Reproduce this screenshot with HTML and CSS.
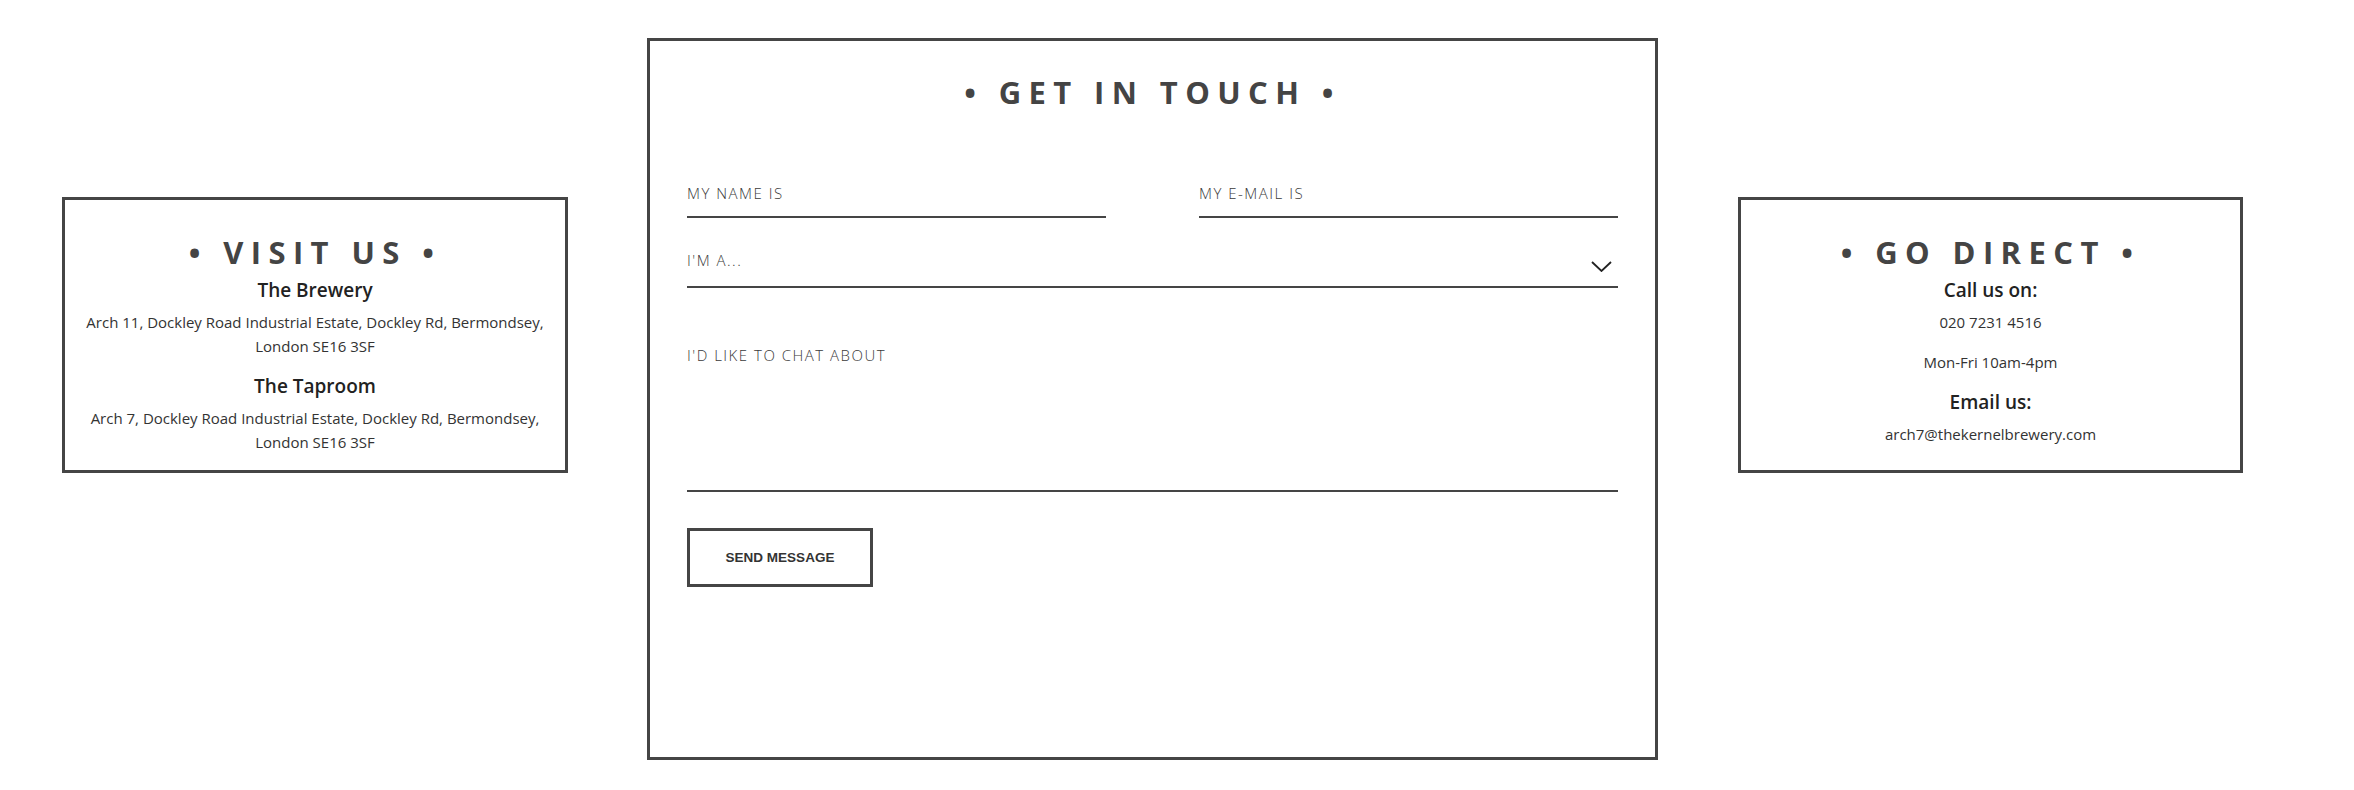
FILE: index.html
```html
<!DOCTYPE html>
<html lang="en">
<head>
<meta charset="utf-8">
<title>Contact</title>
<link rel="stylesheet" href="styles.css">
</head>
<body>
<main class="contact">
  <section class="card card--side">
    <h2 class="card-title">• VISIT US •</h2>
    <h3 class="card-sub">The Brewery</h3>
    <p class="card-text">Arch 11, Dockley Road Industrial Estate, Dockley Rd, Bermondsey,<br>London SE16 3SF</p>
    <h3 class="card-sub">The Taproom</h3>
    <p class="card-text">Arch 7, Dockley Road Industrial Estate, Dockley Rd, Bermondsey,<br>London SE16 3SF</p>
  </section>

  <section class="card card--form">
    <h2 class="card-title card-title--lg">• GET IN TOUCH •</h2>
    <form class="form">
      <div class="form-row">
        <input class="field" type="text" placeholder="MY NAME IS">
        <input class="field" type="email" placeholder="MY E-MAIL IS">
      </div>
      <div class="select-wrap">
        <select class="field field--select">
          <option>I'M A...</option>
        </select>
        <svg class="chevron" width="21" height="11" viewBox="0 0 21 11" aria-hidden="true">
          <path d="M1 1 L10.5 10 L20 1" fill="none" stroke="#222" stroke-width="1.8"/>
        </svg>
      </div>
      <textarea class="field field--area" placeholder="I'D LIKE TO CHAT ABOUT"></textarea>
      <button class="send" type="button">SEND MESSAGE</button>
    </form>
  </section>

  <section class="card card--side card--right">
    <h2 class="card-title">• GO DIRECT •</h2>
    <h3 class="card-sub">Call us on:</h3>
    <p class="card-text">020 7231 4516</p>
    <p class="card-text">Mon-Fri 10am-4pm</p>
    <h3 class="card-sub">Email us:</h3>
    <p class="card-text">arch7@thekernelbrewery.com</p>
  </section>
</main>
</body>
</html>
```
FILE: styles.css
```css
body {
  margin: 0;
  background: #ffffff;
  font-family: "Open Sans", "Segoe UI", sans-serif;
  color: #333333;
}

.contact {
  display: flex;
  align-items: flex-start;
  gap: 79px;
  padding: 38px 0 0 62px;
}

.card {
  box-sizing: border-box;
  border: 3px solid #454545;
  background: #ffffff;
}

.card--side {
  width: 506px;
  height: 276px;
  margin-top: 159px;
  padding: 34px 16px 0;
  text-align: center;
}

.card--right {
  width: 505px;
  margin-left: 1px;
}

.card--form {
  width: 1011px;
  padding: 31px 37px 170px 37px;
}

.card-title {
  margin: 0 0 8px;
  font-size: 31px;
  line-height: 36px;
  font-weight: 700;
  letter-spacing: 7.4px;
  color: #444444;
  text-align: center;
}

.card-title--lg {
  line-height: 40px;
  margin-bottom: 57px;
}

.card-sub {
  margin: 0 0 8px;
  font-size: 19px;
  line-height: 24px;
  font-weight: 600;
  color: #222222;
}

.card-text {
  margin: 0 0 16px;
  font-size: 15px;
  line-height: 24px;
  color: #333333;
}

.form {
  display: flex;
  flex-direction: column;
}

.form-row {
  display: grid;
  grid-template-columns: 1fr 1fr;
  column-gap: 93px;
}

.field {
  display: block;
  box-sizing: border-box;
  width: 100%;
  height: 49px;
  margin: 0;
  padding: 0;
  border: 0;
  border-bottom: 2px solid #454545;
  border-radius: 0;
  background: transparent;
  outline: none;
  font-family: "Open Sans", "Segoe UI", sans-serif;
  font-size: 15px;
  font-weight: 300;
  letter-spacing: 1.5px;
  color: #3a3a3a;
}

.field::placeholder {
  color: #3a3a3a;
  opacity: 1;
}

.select-wrap {
  position: relative;
  margin-top: 21px;
}

.field--select {
  -webkit-appearance: none;
  appearance: none;
  padding-bottom: 6px;
}

.chevron {
  position: absolute;
  right: 6px;
  top: 22px;
  pointer-events: none;
}

.field--area {
  margin-top: 21px;
  height: 183px;
  padding-top: 36px;
  line-height: 20px;
  resize: none;
}

.send {
  align-self: flex-start;
  margin-top: 36px;
  width: 186px;
  height: 59px;
  box-sizing: border-box;
  border: 3px solid #454545;
  background: #ffffff;
  font-family: "Liberation Sans", Arial, sans-serif;
  font-size: 13.5px;
  font-weight: 700;
  color: #333333;
  padding: 0;
}
```
